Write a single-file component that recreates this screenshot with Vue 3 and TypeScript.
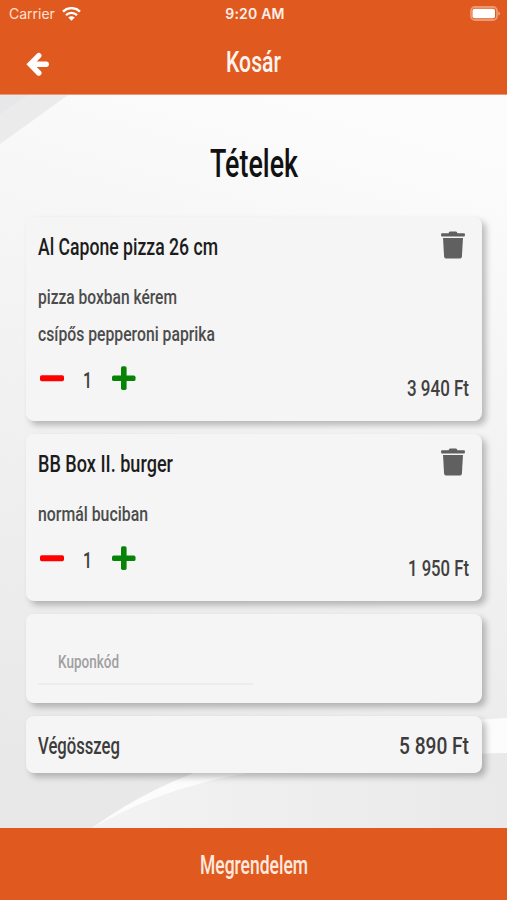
<script setup lang="ts">
import { h, ref, computed, type FunctionalComponent } from 'vue'

interface NarrowProps {
  text: string
  width: number
  size: number
}

interface CartItem {
  id: number
  name: string
  nameWidth: number
  notes: { text: string; width: number }[]
  quantity: number
  price: string
  priceWidth: number
}

// Condensed lettering: real text, squeezed to a fixed width, on a box as tall as its capitals.
const NarrowText: FunctionalComponent<NarrowProps> = (props) => {
  const height = Math.round(props.size * 0.711)
  return h('svg', { width: props.width, height, overflow: 'visible', role: 'presentation' }, [
    h(
      'text',
      {
        x: 0,
        y: height,
        'font-size': props.size,
        textLength: props.width,
        lengthAdjust: 'spacingAndGlyphs',
        fill: 'currentColor',
      },
      props.text,
    ),
  ])
}
NarrowText.props = ['text', 'width', 'size']

const items = ref<CartItem[]>([
  {
    id: 1,
    name: 'Al Capone pizza 26 cm',
    nameWidth: 180,
    notes: [
      { text: 'pizza boxban kérem', width: 139 },
      { text: 'csípős pepperoni paprika', width: 177 },
    ],
    quantity: 1,
    price: '3 940 Ft',
    priceWidth: 62,
  },
  {
    id: 2,
    name: 'BB Box II. burger',
    nameWidth: 135,
    notes: [{ text: 'normál buciban', width: 110 }],
    quantity: 1,
    price: '1 950 Ft',
    priceWidth: 61,
  },
])

const total = computed(() => '5 890 Ft')
</script>

<template>
  <div class="screen">
    <header class="header">
      <div class="status">
        <div class="carrier">
          <span>Carrier</span>
          <svg width="19" height="14" viewBox="0 0 19 14" fill="none" stroke="#fff" stroke-width="2.4">
            <path d="M1 4.600C5.800 0 13.200 0 18 4.600" />
            <path d="M4 8.100c3.100-3 7.900-3 11 0" />
            <path d="M6.300 10.500c1.800-1.600 4.600-1.600 6.400 0L9.500 13.700z" fill="#fff" stroke="none" />
          </svg>
        </div>
        <span class="clock">9:20 AM</span>
        <svg class="battery" width="31" height="15" viewBox="0 0 31 15">
          <rect x="1" y="1" width="26" height="13" rx="4" fill="none" stroke="#fff" stroke-opacity=".38" stroke-width="1.800" />
          <rect x="2.500" y="2.700" width="22.500" height="9.600" rx="2" fill="#fff" />
          <path d="M28.300 5.500c2.200.7 2.200 3.300 0 4z" fill="#fff" fill-opacity=".45" />
        </svg>
      </div>
      <div class="titlebar">
        <svg class="back" width="24" height="26" viewBox="0 0 24 26" fill="none" stroke="#fff" stroke-width="5.400">
          <path d="M12.800 3.600 4.200 12.300l8.600 8.700" stroke-linecap="round" stroke-linejoin="miter" />
          <path d="M5 12.300h15.200" stroke-linecap="round" />
        </svg>
        <NarrowText class="title" text="Kosár" :width="55" :size="29.5" />
      </div>
    </header>

    <main class="content">
      <svg class="backdrop" width="507" height="733" viewBox="0 0 507 733" preserveAspectRatio="none">
        <defs>
          <linearGradient id="sheet" x1="0.6" y1="0" x2="0.4" y2="1">
            <stop offset="0" stop-color="#fcfcfc" />
            <stop offset=".35" stop-color="#f4f4f5" />
            <stop offset="1" stop-color="#e8e8e8" />
          </linearGradient>
          <linearGradient id="floor" x1="0" y1="0" x2="1" y2="0">
            <stop offset="0" stop-color="#f3f3f4" />
            <stop offset="1" stop-color="#e9e9ea" />
          </linearGradient>
        </defs>
        <rect width="507" height="733" fill="url(#sheet)" />
        <path d="M0 0h68L0 49z" fill="#ebebec" />
        <path d="M0 0h28L0 19z" fill="#e7e7e9" />
        <path d="M92 733C160 685 250 639 507 623v110z" fill="#fcfcfc" />
        <path d="M92 733C180 683 270 663 507 658v75z" fill="url(#floor)" />
      </svg>

      <NarrowText class="heading" text="Tételek" :width="88" :size="38" />

      <section v-for="item in items" :key="item.id" class="card item">
        <div class="item-top">
          <NarrowText class="name" :text="item.name" :width="item.nameWidth" :size="23.8" />
          <svg class="trash" width="24" height="28" viewBox="0 0 24 28" fill="#606060">
            <path d="M8 1.300Q8.300.4 9.300.4h5.400q1 0 1.300.9l.4.900H23q.9 0 .9.900v1.500q0 .9-.9.900H1q-.9 0-.9-.9V3.100q0-.9.9-.9h6.600z" />
            <path d="M2 7h20l-1.100 18.400q-.2 2.200-2.300 2.200H5.400q-2.100 0-2.300-2.200z" />
          </svg>
        </div>
        <div class="notes">
          <NarrowText v-for="note in item.notes" :key="note.text" :text="note.text" :width="note.width" :size="20.4" />
        </div>
        <div class="item-bottom">
          <div class="stepper">
            <svg width="24" height="24" viewBox="0 0 24 24"><rect y="9.200" width="24" height="6" rx="1.700" fill="#fe0000" /></svg>
            <NarrowText class="quantity" :text="String(item.quantity)" :width="9" :size="22" />
            <svg width="24" height="24" viewBox="0 0 24 24" fill="#078407">
              <rect y="9.500" width="23.500" height="5.600" rx="1.700" />
              <rect x="9" y=".3" width="5.600" height="23.700" rx="1.700" />
            </svg>
          </div>
          <NarrowText class="price" :text="item.price" :width="item.priceWidth" :size="22.7" />
        </div>
      </section>

      <section class="card coupon">
        <div class="field">
          <NarrowText text="Kuponkód" :width="61" :size="18.8" />
        </div>
      </section>

      <section class="card total">
        <NarrowText text="Végösszeg" :width="82" :size="24.6" />
        <NarrowText :text="total" :width="70" :size="24.6" />
      </section>
    </main>

    <footer class="order">
      <NarrowText text="Megrendelem" :width="108" :size="25" />
    </footer>
  </div>
</template>

<style>
body {
  margin: 0;
}
</style>

<style scoped>
.screen {
  display: flex;
  flex-direction: column;
  width: 507px;
  height: 900px;
  overflow: hidden;
  font-family: Roboto, 'Liberation Sans', sans-serif;
  font-weight: 500;
}

svg {
  display: block;
  flex: none;
}

.header {
  height: 95px;
  background: #e05a20;
  border-bottom: 1px solid #e69a78;
  box-sizing: border-box;
  color: #fff4ef;
  flex: none;
}

.status {
  display: grid;
  grid-template-columns: 1fr auto 1fr;
  align-items: center;
  height: 27px;
  padding: 0 6px 0 9px;
  font-family: Inter, Roboto, sans-serif;
  font-size: 14px;
  font-weight: 400;
}

.carrier {
  display: flex;
  align-items: center;
  gap: 7px;
  color: #ffe0d2;
}

.clock {
  font-weight: 600;
  font-size: 14px;
  letter-spacing: 0.2px;
  color: #fff0e9;
}

.battery {
  justify-self: end;
}

.titlebar {
  display: grid;
  grid-template-columns: 200px 55px;
  align-items: center;
  padding: 24px 0 0 26px;
}

.titlebar .back {
  margin-top: 1px;
}

.titlebar .title {
  margin-top: -6px;
}

.content {
  position: relative;
  display: flex;
  flex-direction: column;
  gap: 13px;
  flex: 1;
  padding: 55px 25px 0 26px;
  box-sizing: border-box;
  overflow: hidden;
}

.backdrop {
  position: absolute;
  inset: 0;
}

.heading {
  position: relative;
  align-self: center;
  margin-bottom: 27px;
  color: #111;
}

.card {
  position: relative;
  background: #f5f5f5;
  border-radius: 8px;
  box-shadow: 4px 4px 6px rgba(0, 0, 0, 0.25);
  box-sizing: border-box;
  padding: 0 13px 0 12px;
  color: #404040;
}

.item {
  padding-top: 14px;
  padding-right: 17px;
  padding-bottom: 25px;
}

.item-top {
  display: flex;
  justify-content: space-between;
  align-items: flex-start;
}

.name {
  margin-top: 7px;
  color: #1c1c1c;
}

.notes {
  display: flex;
  flex-direction: column;
  gap: 22px;
  padding-top: 30px;
  color: #4c4c4c;
}

.item-bottom {
  display: flex;
  justify-content: space-between;
  align-items: flex-end;
  margin: 25px -4px 0 2px;
}

.stepper {
  display: flex;
  align-items: center;
  gap: 19px;
  margin-bottom: 6px;
}

.stepper .quantity {
  margin: 4px 1px 0 0;
}

.coupon {
  height: 89px;
  padding-top: 41px;
}

.field {
  width: 215px;
  height: 30px;
  padding-left: 20px;
  box-sizing: border-box;
  border-bottom: 2px solid #ececec;
  color: #a0a0a0;
}

.total {
  display: flex;
  justify-content: space-between;
  align-items: center;
  height: 57px;
  padding-top: 1px;
  color: #3c3c3c;
}

.order {
  display: flex;
  align-items: center;
  justify-content: center;
  height: 72px;
  padding-top: 2px;
  box-sizing: border-box;
  background: #e05a20;
  color: #ffe9df;
  flex: none;
}
</style>
